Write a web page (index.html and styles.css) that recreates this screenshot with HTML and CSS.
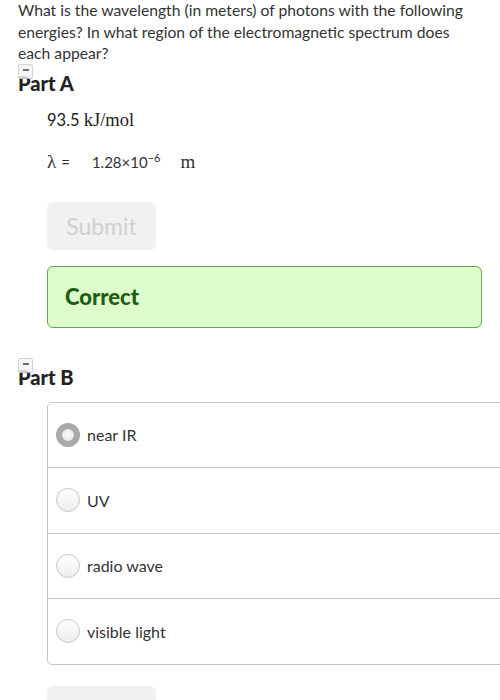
FILE: index.html
```html
<!DOCTYPE html>
<html>
<head>
<meta charset="utf-8">
<link rel="stylesheet" href="styles.css">
</head>
<body>
<div class="page">
  <p class="question">What is the wavelength (in meters) of photons with the following energies? In what region of the electromagnetic spectrum does each appear?</p>

  <div class="part">
    <h2 class="part-title"><span class="toggle"><span class="dash"></span></span>Part A</h2>
    <div class="part-body">
      <div class="given"><span class="num">93.5</span>&nbsp;<span class="units">kJ/mol</span></div>
      <div class="answer"><span class="lambda">λ</span><span class="eq">=</span><span class="val">1.28×10<sup>−6</sup></span><span class="unit">m</span></div>
      <button class="submit">Submit</button>
      <div class="correct">Correct</div>
    </div>
  </div>

  <div class="part part-b">
    <h2 class="part-title"><span class="toggle"><span class="dash"></span></span>Part B</h2>
    <div class="part-body">
      <ul class="choices">
        <li class="choice"><span class="radio selected"></span>near IR</li>
        <li class="choice"><span class="radio"></span>UV</li>
        <li class="choice"><span class="radio"></span>radio wave</li>
        <li class="choice"><span class="radio"></span>visible light</li>
      </ul>
      <button class="submit submit-b">Submit</button>
    </div>
  </div>
</div>
</body>
</html>
```
FILE: styles.css
```css
html, body {
  margin: 0;
  padding: 0;
  overflow: hidden;
  background: #fff;
}
body {
  font-family: Lato, "Open Sans", sans-serif;
  color: #333;
}
.page {
  padding: 0 0 0 18px;
}
.question {
  margin: 0;
  font-size: 15.7px;
  line-height: 21.5px;
  width: 462px;
}
.part {
  position: relative;
}
.part-title {
  position: relative;
  margin: 6px 0 0 0;
  font-size: 20px;
  font-weight: 900;
  line-height: 24px;
  color: #222;
}
.toggle {
  position: absolute;
  left: 0;
  top: -7px;
  width: 15px;
  height: 15px;
  border: 1px solid #ccc;
  border-radius: 2px;
  background: #f4f4f4;
  box-sizing: border-box;
  opacity: 0.85;
}
.toggle .dash {
  position: absolute;
  left: 4px;
  top: 4px;
  width: 6px;
  height: 2px;
  background: #555;
}
.part-body {
  padding-left: 29px;
}
.given {
  margin-top: 14px;
  line-height: 22px;
  color: #222;
}
.given .num {
  font-size: 16.5px;
}
.given .units {
  font-family: "Liberation Serif", serif;
  font-size: 18.5px;
}
.answer {
  margin-top: 20px;
  display: flex;
  align-items: baseline;
  font-size: 15px;
  line-height: 22px;
  color: #333;
}
.lambda {
  font-family: "Liberation Serif", serif;
  font-size: 19px;
  margin-right: 5px;
}
.eq {
  margin-right: 22px;
}
.val sup {
  font-size: 11px;
  vertical-align: 6px;
  line-height: 0;
}
.unit {
  font-family: "Liberation Serif", serif;
  font-size: 19px;
  margin-left: 20px;
}
.submit {
  display: block;
  margin-top: 29px;
  width: 109px;
  height: 48px;
  border: none;
  border-radius: 6px;
  background: #f1f1f1;
  color: #d0d0d0;
  font-family: Lato, "Open Sans", sans-serif;
  font-size: 23px;
  padding: 0;
}
.correct {
  margin-top: 16px;
  width: 435px;
  height: 62px;
  box-sizing: border-box;
  border: 1px solid #66a24f;
  border-radius: 6px;
  background: #ddfccc;
  color: #1c5e14;
  font-weight: 900;
  font-size: 22px;
  display: flex;
  align-items: center;
  padding-left: 17px;
}
.part-b .part-title {
  margin-top: 37px;
}
.choices {
  list-style: none;
  margin: 13px 0 0 0;
  padding: 0;
  width: 480px;
  border: 1px solid #c6c6c6;
  border-radius: 5px 0 0 5px;
}
.choice {
  height: 64.5px;
  display: flex;
  align-items: center;
  padding-left: 8px;
  font-size: 16px;
  color: #333;
  border-top: 1px solid #c6c6c6;
}
.choice:first-child {
  border-top: none;
}
.radio {
  width: 22px;
  height: 22px;
  border-radius: 50%;
  border: 1px solid #c8c8c8;
  background: linear-gradient(#fff, #ececec);
  margin-right: 7px;
  flex: none;
}
.radio.selected {
  box-sizing: border-box;
  width: 24px;
  height: 24px;
  border: 6px solid #a9a9a9;
  background: radial-gradient(circle, #fafafa 0, #e2e2e2 100%);
}
.submit-b {
  margin-top: 21px;
}
```
